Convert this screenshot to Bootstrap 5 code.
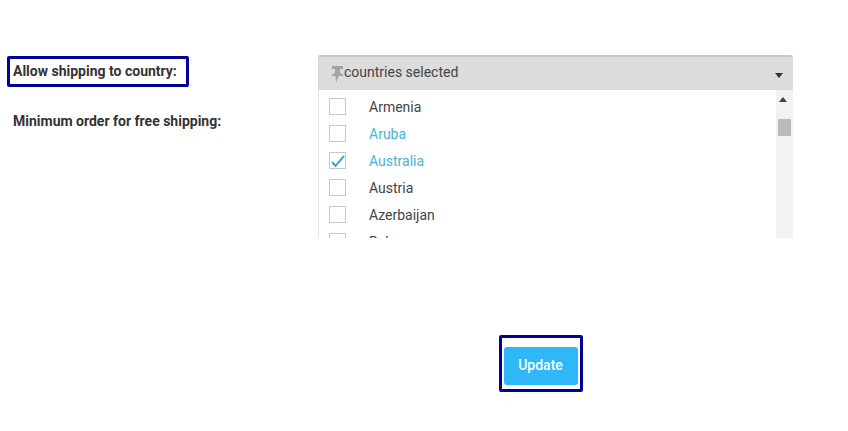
<!DOCTYPE html>
<html>
<head>
  <title>Shipping settings</title>
  <link href="https://cdn.jsdelivr.net/npm/bootstrap@5.3.1/dist/css/bootstrap.min.css" rel="stylesheet">
  <style>
    body { font-family: Roboto, "Liberation Sans", sans-serif; font-size: 14px; color: #333; background: #fff; }
    .page-wrap { padding-top: 55px; }
    .label-col { width: 318px; padding-left: 7px; }
    .mark-box { border: 3px solid #00009b; border-radius: 2px; }
    .label-first { width: 182px; height: 31px; padding-left: 3px; line-height: 25px; margin-top: 1px; }
    .label-text { font-weight: 700; font-size: 14px; color: #333; }
    .label-second { padding-left: 6px; margin-top: 23px; line-height: 22px; }
    .picker { width: 475px; }
    .picker-head { height: 35px; background: #dcdcdc; border-top: 2px solid #c9c9c9; border-radius: 2px 2px 0 0; padding: 0 10px 0 12px; font-size: 14px; color: #444; }
    .head-text { padding-bottom: 2px; }
    .pin { width: 15px; height: 17px; margin-right: -1px; margin-top: 1px; flex: none; filter: blur(.5px); }
    .caret-down { border-left: 4px solid transparent; border-right: 4px solid transparent; border-top: 5px solid #333; margin-top: 3px; }
    .picker-body { height: 148px; overflow: hidden; border-left: 1px solid #e6e6e6; }
    .country-list { flex: 1; padding-top: 3px; }
    .country-row { height: 27px; padding-left: 10px; color: #444; }
    .country-row.picked { color: #3fb6d9; }
    .country-name { padding-top: 2px; }
    .tick-box { width: 17px; height: 17px; border: 1px solid #c8c8c8; margin-right: 23px; flex: none; }
    .tick-box svg { display: block; margin: 1px 0 0 1px; }
    .fake-scroll { width: 17px; background: #f2f2f2; padding: 7px 3px 0 0; }
    .caret-up { border-left: 4px solid transparent; border-right: 4px solid transparent; border-bottom: 5px solid #444; }
    .fake-thumb { width: 13px; height: 17px; background: #bbb; margin: 17px -3px 0 0; }
    .update-mark { width: 84px; height: 57px; margin-left: 499px; margin-top: 97px; padding: 9px 3px 0 2px; }
    .btn-update { width: 74px; height: 38px; background: #2fb8f8; border: 0; border-radius: 3px; color: #fff; font-size: 14px; font-weight: 500; padding: 0 1px 2px 0; }
  </style>
</head>
<body>
  <div class="page-wrap">
    <div class="d-flex">
      <div class="label-col">
        <div class="mark-box label-first"><span class="label-text">Allow shipping to country:</span></div>
        <div class="label-second"><span class="label-text">Minimum order for free shipping:</span></div>
      </div>
      <div class="picker">
        <div class="picker-head d-flex align-items-center">
          <svg class="pin" viewBox="0 0 15 17"><path d="M2 0h11v3h-3v3.500L14 10H8.500L6 17l-.5-7H1l4-3.500V3H2z" fill="#a4a4a4"/></svg>
          <span class="head-text flex-grow-1">countries selected</span>
          <span class="caret-down"></span>
        </div>
        <div class="picker-body d-flex">
          <ul class="country-list list-unstyled mb-0" id="countries"></ul>
          <div class="fake-scroll d-flex flex-column align-items-center">
            <span class="caret-up"></span>
            <span class="fake-thumb"></span>
          </div>
        </div>
      </div>
    </div>
    <div class="mark-box update-mark">
      <button class="btn btn-update" type="button">Update</button>
    </div>
  </div>

<script src="https://cdn.jsdelivr.net/npm/bootstrap@5.3.1/dist/js/bootstrap.bundle.min.js"></script>
<script>
  const countries = [
    { name: "Armenia" },
    { name: "Aruba", picked: true },
    { name: "Australia", picked: true, ticked: true },
    { name: "Austria" },
    { name: "Azerbaijan" },
    { name: "Bahamas" }
  ];
  const tick = '<svg width="15" height="15" viewBox="0 0 15 15"><path d="M1 8l3.500 4L13 2" fill="none" stroke="#3aa9e0" stroke-width="2"/></svg>';

  document.getElementById("countries").innerHTML = countries.map(c => `
    <li class="country-row d-flex align-items-center ${c.picked ? "picked" : ""}">
      <span class="tick-box">${c.ticked ? tick : ""}</span><span class="country-name">${c.name}</span>
    </li>`).join("");
</script>
</body>
</html>
